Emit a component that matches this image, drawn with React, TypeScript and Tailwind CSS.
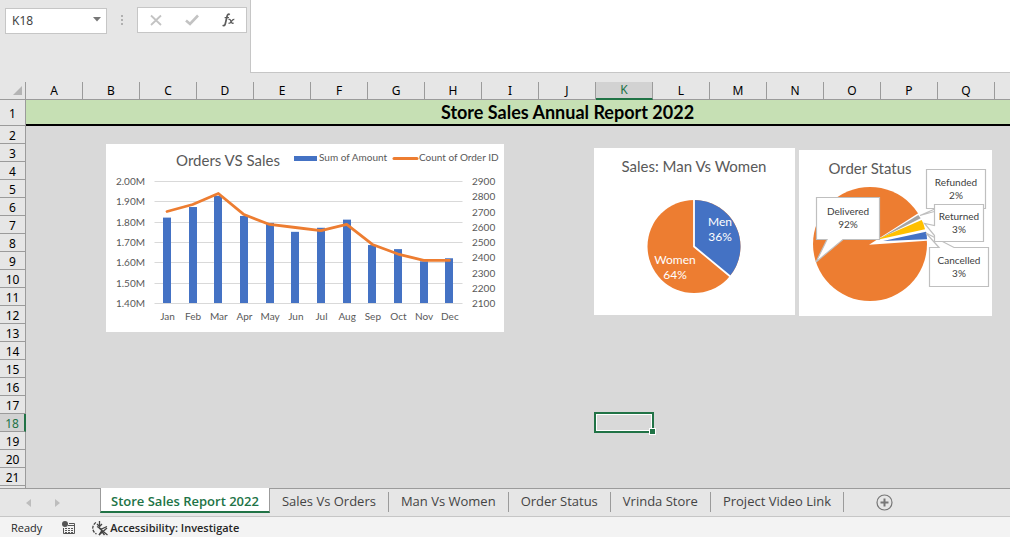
import React from "react";

const COLUMNS = "ABCDEFGHIJKLMNOPQRS".split("");
const ROWS = Array.from({ length: 21 }, (_, i) => i + 2);
const SELECTED = { column: "K", row: 18 };

const MONTHS = [
  { name: "Jan", sales: 1.82, orders: 2700 },
  { name: "Feb", sales: 1.872, orders: 2746 },
  { name: "Mar", sales: 1.927, orders: 2818 },
  { name: "Apr", sales: 1.828, orders: 2680 },
  { name: "May", sales: 1.794, orders: 2615 },
  { name: "Jun", sales: 1.75, orders: 2595 },
  { name: "Jul", sales: 1.77, orders: 2575 },
  { name: "Aug", sales: 1.81, orders: 2615 },
  { name: "Sep", sales: 1.685, orders: 2484 },
  { name: "Oct", sales: 1.665, orders: 2421 },
  { name: "Nov", sales: 1.605, orders: 2379 },
  { name: "Dec", sales: 1.62, orders: 2379 },
];

const TABS = ["Sales Vs Orders", "Man Vs Women", "Order Status", "Vrinda Store", "Project Video Link"];

function FormulaBar() {
  return (
    <header className="flex h-[82px] shrink-0 items-start bg-[#e6e6e6]">
      <div className="relative mt-[7px] ml-[5px] h-[26px] w-[102px] shrink-0">
        <input
          aria-label="Name box"
          defaultValue="K18"
          className="h-full w-full border border-[#c6c6c6] bg-white px-1.5 text-xs text-[#444] outline-none"
        />
        <svg className="pointer-events-none absolute top-2.5 right-1.5" width="8" height="5" aria-hidden="true">
          <path d="M0 0h8L4 4.5z" fill="#777" />
        </svg>
      </div>
      <svg className="mt-[14px] ml-[14px] shrink-0" width="2" height="12" aria-hidden="true">
        <path d="M0 1h2v2H0zM0 5h2v2H0zM0 9h2v2H0z" fill="#b0b0b0" />
      </svg>
      <div className="mt-[7px] ml-[14px] flex h-[26px] w-[110px] shrink-0 items-center justify-around border border-[#c6c6c6] bg-white">
        <button type="button" aria-label="Cancel">
          <svg width="12" height="12" fill="none" stroke="#c3c3c3" strokeWidth="1.8">
            <path d="M1 1.5 11 11M11 1.5 1 11" />
          </svg>
        </button>
        <button type="button" aria-label="Enter">
          <svg width="14" height="12" fill="none" stroke="#c3c3c3" strokeWidth="2.6">
            <path d="M1 6.5 5 10 13 1.5" />
          </svg>
        </button>
        <button type="button" aria-label="Insert function">
          <svg width="13" height="14" fill="none" stroke="#5c5c5c">
            <path d="M7.8 1.6C6.3.6 5.4 1.6 5 3.5L3.3 10.8C2.9 12.6 1.8 13 .6 12.3" strokeWidth="1.7" />
            <path d="M2.6 4.6H7" strokeWidth="1.2" />
            <path d="M6.5 6.5c1.3-.5 1.8 0 2.3 1.5s1 2.9 2.9 2M12.3 6.5C10.5 6 9.5 8.7 8.3 9.8c-.6.5-1.2.5-1.8.2" strokeWidth="1.3" />
          </svg>
        </button>
      </div>
      <textarea
        aria-label="Formula bar"
        className="ml-[3px] h-[73px] min-w-0 flex-1 resize-none border border-t-0 border-r-0 border-[#c6c6c6] bg-white p-2 text-xs outline-none"
      />
    </header>
  );
}

function SheetGrid() {
  return (
    <table className="w-[1109px] table-fixed border-separate border-spacing-0">
      <colgroup>
        <col className="w-[26px]" />
        {COLUMNS.map((c) => (
          <col key={c} className="w-[57px]" />
        ))}
      </colgroup>
      <thead>
        <tr className="h-[18px]">
          <th className="border-r border-b border-[#9b9b9b] bg-[#e6e6e6] p-0">
            <svg className="mr-[3px] ml-auto" width="9" height="9" aria-hidden="true">
              <path d="M9 0v9H0z" fill="#b4b4b4" />
            </svg>
          </th>
          {COLUMNS.map((c) => (
            <th
              key={c}
              scope="col"
              className={
                c === SELECTED.column
                  ? "border-r border-b-2 border-r-[#9b9b9b] border-b-[#217346] bg-[#d2d2d2] p-0 text-xs leading-4 font-normal text-[#217346]"
                  : "border-r border-b border-[#9b9b9b] bg-[#e6e6e6] p-0 text-xs leading-4 font-normal text-black"
              }
            >
              {c}
            </th>
          ))}
        </tr>
      </thead>
      <tbody>
        <tr className="h-[26px]">
          <th scope="row" className="border-r border-b border-[#9b9b9b] bg-[#e6e6e6] px-0 pt-0.5 pb-0 text-xs leading-[15px] font-normal text-black">
            1
          </th>
          <td
            colSpan={19}
            className="border-b-2 border-black bg-[#c6e0b4] p-0 text-center font-[Lato,sans-serif] text-lg leading-6 font-bold text-black"
          >
            Store Sales Annual Report 2022
          </td>
        </tr>
        {ROWS.map((r) => (
          <tr key={r} className="h-[18px]">
            <th
              scope="row"
              className={
                r === SELECTED.row
                  ? "border-r-2 border-b border-r-[#217346] border-b-[#9b9b9b] bg-[#d2d2d2] px-0 pt-0.5 pb-0 text-xs leading-[15px] font-normal text-[#217346]"
                  : "border-r border-b border-[#9b9b9b] bg-[#e6e6e6] px-0 pt-0.5 pb-0 text-xs leading-[15px] font-normal text-black"
              }
            >
              {r}
            </th>
            {COLUMNS.map((c) => (
              <td key={c} className="relative p-0">
                {c === SELECTED.column && r === SELECTED.row && (
                  <div className="absolute -top-0.5 -right-px -bottom-px -left-0.5 border-2 border-[#217346]">
                    <div className="h-full border border-white" />
                    <span className="absolute -right-1 -bottom-1 size-[7px] border border-white bg-[#217346]" />
                  </div>
                )}
              </td>
            ))}
          </tr>
        ))}
      </tbody>
    </table>
  );
}

function OrdersChart() {
  const bottom = 159;
  const height = 122;
  const xOf = (i: number) => 61.5 + i * 25.67;
  const salesY = (v: number) => bottom - ((v - 1.4) / 0.6) * height;
  const ordersY = (v: number) => bottom - ((v - 2100) / 800) * height;
  return (
    <svg className="block bg-white" width="398" height="188" fill="#595959" fontSize="10" role="img" aria-label="Orders VS Sales">
      <text x="122" y="22" fontSize="15" textAnchor="middle">Orders VS Sales</text>
      <rect x="188" y="12" width="23" height="5" fill="#4472c4" />
      <text x="213" y="17">Sum of Amount</text>
      <path d="M288 14.5h23" stroke="#ed7d31" strokeWidth="3" strokeLinecap="round" />
      <text x="313" y="17">Count of Order ID</text>
      {[2, 1.9, 1.8, 1.7, 1.6, 1.5, 1.4].map((v) => (
        <g key={v}>
          <path d={`M48.5 ${Math.round(salesY(v)) + 0.5}h308`} stroke="#d9d9d9" />
          <text x="39" y={Math.round(salesY(v)) + 4} textAnchor="end">{v.toFixed(2)}M</text>
        </g>
      ))}
      {[2900, 2800, 2700, 2600, 2500, 2400, 2300, 2200, 2100].map((v) => (
        <text key={v} x="366" y={Math.round(ordersY(v)) + 4}>{v}</text>
      ))}
      {MONTHS.map((m, i) => (
        <g key={m.name}>
          <rect x={Math.round(xOf(i) - 4.5)} y={salesY(m.sales)} width="8" height={bottom - salesY(m.sales)} fill="#4472c4" />
          <text x={xOf(i)} y="176" textAnchor="middle">{m.name}</text>
        </g>
      ))}
      <polyline
        points={MONTHS.map((m, i) => `${xOf(i) - 0.5},${ordersY(m.orders)}`).join(" ")}
        fill="none"
        stroke="#ed7d31"
        strokeWidth="2.8"
        strokeLinecap="round"
        strokeLinejoin="round"
      />
    </svg>
  );
}

function GenderChart() {
  return (
    <svg className="block bg-white" width="201" height="167" fontSize="12" textAnchor="middle" role="img" aria-label="Sales: Man Vs Women">
      <text x="100" y="24" fontSize="15" fill="#595959">Sales: Man Vs Women</text>
      <circle cx="100" cy="98.5" r="46.5" fill="#ed7d31" />
      <path d="M100 98.5V52A46.5 46.5 0 0 1 135.8 128.1Z" fill="#4472c4" />
      <path d="M100 51V98.5L136.6 128.8" fill="none" stroke="#fff" strokeWidth="1.8" />
      <g fill="#fff">
        <text x="126" y="78">Men</text>
        <text x="126" y="93">36%</text>
        <text x="81" y="116">Women</text>
        <text x="81" y="131">64%</text>
      </g>
    </svg>
  );
}

function StatusChart() {
  return (
    <svg className="block bg-white" width="193" height="166" fontSize="10" textAnchor="middle" role="img" aria-label="Order Status">
      <text x="71" y="24" fontSize="15" fill="#595959">Order Status</text>
      <circle cx="71" cy="94" r="57" fill="#ed7d31" />
      <path d="M70 94.7 125 59.5 135 68V90.2Z" fill="#fff" />
      <path d="M80 89 119.3 65 121.7 68.3Z" fill="#a5a5a5" />
      <path d="M76 90.2 122.7 70Q125 74 126 79.3Z" fill="#ffc000" />
      <path d="M84 91 127 81.7Q128 85 128 89.3Z" fill="#4472c4" />
      <g fill="#fff" stroke="#bfbfbf" strokeWidth="1.2">
        <path d="M17.5 47.5h63v42H44L17 112 28 89.5H17.5Z" />
        <path d="M127.5 19.5h59v39H146L121 65.5 137 58.5h-9.5Z" />
        <path d="M130.5 97.5H140L127 83 155 97.5h34.5v39h-59Z" />
        <path d="M135.5 54.5h49v37h-49V85.5L125.5 73.5 135.5 75.5Z" />
      </g>
      <g fill="#404040">
        <text x="49" y="65">Delivered</text>
        <text x="49" y="78">92%</text>
        <text x="157" y="36">Refunded</text>
        <text x="157" y="49">2%</text>
        <text x="160" y="70">Returned</text>
        <text x="160" y="83">3%</text>
        <text x="160" y="114">Cancelled</text>
        <text x="160" y="127">3%</text>
      </g>
    </svg>
  );
}

function SheetTabs() {
  return (
    <nav aria-label="Sheets" className="flex h-[29px] shrink-0 border-t border-b border-t-[#9b9b9b] border-b-[#c6c6c6] bg-[#e6e6e6] font-['Open_Sans',sans-serif]">
      <div className="flex w-[100px] shrink-0 items-center gap-6 pl-[26px]">
        <button type="button" aria-label="Previous sheet">
          <svg width="5" height="8"><path d="M5 0v8L0 4z" fill="#bdbdbd" /></svg>
        </button>
        <button type="button" aria-label="Next sheet">
          <svg width="5" height="8"><path d="M0 0v8l5-4z" fill="#bdbdbd" /></svg>
        </button>
      </div>
      <button
        type="button"
        aria-current="page"
        className="-mt-px mb-[3px] shrink-0 border-r border-b-2 border-l border-x-[#9b9b9b] border-b-[#217346] bg-white px-2.5 pt-0.5 text-[13px] leading-4 font-semibold whitespace-nowrap text-[#217346]"
      >
        Store Sales Report 2022
      </button>
      {TABS.map((t) => (
        <button
          key={t}
          type="button"
          className="mt-[3px] mb-1 shrink-0 border-r border-[#9b9b9b] px-3 pb-0.5 text-[13px] leading-4 whitespace-nowrap text-[#444]"
        >
          {t}
        </button>
      ))}
      <button type="button" aria-label="New sheet" className="ml-8 flex shrink-0 items-center">
        <svg width="17" height="17" fill="none" stroke="#777">
          <circle cx="8.5" cy="8.5" r="7.5" strokeWidth="1.2" />
          <path d="M8.5 4.5v8M4.5 8.5h8" strokeWidth="2" />
        </svg>
      </button>
    </nav>
  );
}

function StatusBar() {
  return (
    <footer className="flex h-5 shrink-0 items-center bg-[#f3f3f3] pt-0.5 pl-[11px] font-['Open_Sans',sans-serif] text-[11px] text-[#262626]">
      <span>Ready</span>
      <button type="button" aria-label="Record macro" className="ml-5">
        <svg width="13" height="14" fill="none" stroke="#555">
          <path d="M7 2.5h5.5v10H1.5V7" />
          <path d="M6 4.5h6.5" />
          <path d="M3 7.5h8M3 9.5h8M3 11.5h8" strokeDasharray="2 1" />
          <circle cx="3" cy="3" r="3" fill="#555" stroke="none" />
        </svg>
      </button>
      <button type="button" className="ml-[17px] flex items-center gap-0.5 font-semibold whitespace-nowrap">
        <svg width="16" height="15" fill="none" stroke="#444" strokeWidth="1.3" aria-hidden="true">
          <path d="M4 1.5A6.5 6.5 0 0 0 4.5 13" strokeDasharray="3 1.2" />
          <path d="M7.5 0v5M5 3l2.5 2.5L10 3" />
          <path d="M5 5.5 9.5 8 15 5.5M9.5 8v2L7 14M9.5 10l3 4" />
          <path d="m7 7 8.5 7M15 7l-8 7" />
        </svg>
        Accessibility: Investigate
      </button>
    </footer>
  );
}

export default function App() {
  return (
    <div className="flex h-screen flex-col overflow-hidden bg-[#e6e6e6] font-['Noto_Sans',sans-serif]">
      <FormulaBar />
      <main className="relative min-h-0 flex-1 overflow-hidden bg-[#d9d9d9]">
        <SheetGrid />
        <div className="absolute top-[62px] left-[106px] font-[Lato,sans-serif]">
          <OrdersChart />
        </div>
        <div className="absolute top-[66px] left-[594px] font-[Lato,sans-serif]">
          <GenderChart />
        </div>
        <div className="absolute top-[68px] left-[799px] font-[Lato,sans-serif]">
          <StatusChart />
        </div>
      </main>
      <SheetTabs />
      <StatusBar />
    </div>
  );
}
